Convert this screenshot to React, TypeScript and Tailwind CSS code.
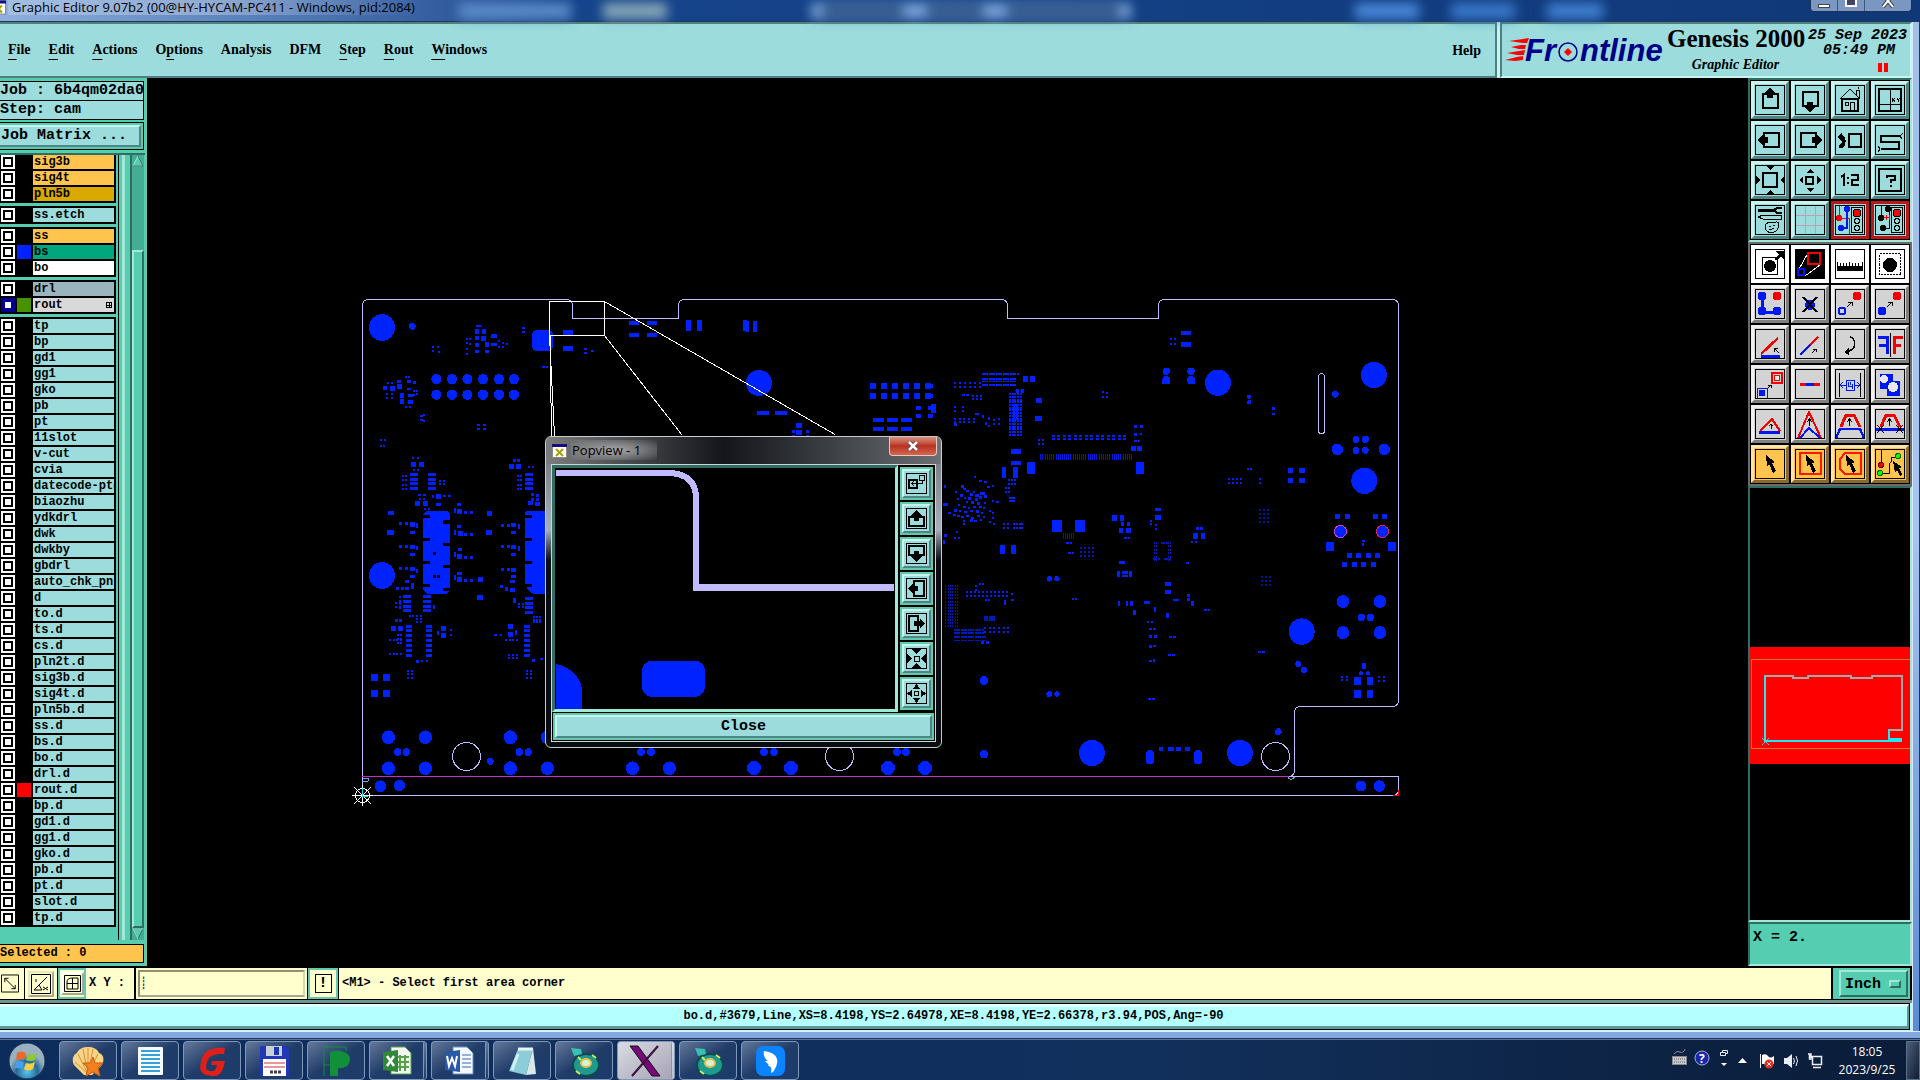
import React from "react";

const MONO = "font-['Liberation_Mono',monospace]";
const SERIF = "font-['Liberation_Serif',serif]";
const UI = "font-['Open_Sans',sans-serif]";

/* ---------- layer list ---------- */

type Layer = { name: string; bg?: string; swatch?: string; active?: boolean };

const GOLD = "bg-[#ffc44d]";
const layerGroups: Layer[][] = [
  [
    { name: "sig3b", bg: GOLD },
    { name: "sig4t", bg: GOLD },
    { name: "pln5b", bg: "bg-[#d9a900]" },
  ],
  [{ name: "ss.etch" }],
  [
    { name: "ss", bg: GOLD },
    { name: "bs", bg: "bg-[#00a67c]", swatch: "bg-[#0022ff]" },
    { name: "bo", bg: "bg-white" },
  ],
  [
    { name: "drl", bg: "bg-[#9bb5bf]" },
    { name: "rout", bg: "bg-[#d9d9d9]", swatch: "bg-[#479200]", active: true },
  ],
  [
    "tp", "bp", "gd1", "gg1", "gko", "pb", "pt", "11slot", "v-cut", "cvia", "datecode-ptd", "biaozhu",
    "ydkdrl", "dwk", "dwkby", "gbdrl", "auto_chk_pnl", "d", "to.d", "ts.d", "cs.d", "pln2t.d", "sig3b.d",
    "sig4t.d", "pln5b.d", "ss.d", "bs.d", "bo.d", "drl.d", "rout.d", "bp.d", "gd1.d", "gg1.d", "gko.d",
    "pb.d", "pt.d", "slot.d", "tp.d",
  ].map((name) => (name === "rout.d" ? { name, swatch: "bg-[#ff0000]" } : { name })),
];

function LayerRow({ layer }: { layer: Layer }) {
  const id = "layer-" + layer.name;
  return (
    <div className="flex h-[14px] gap-[2px] pl-px">
      <span className={"flex w-[14px] shrink-0 items-center justify-center " + (layer.active ? "bg-[#000090]" : "bg-white")}>
        <input
          id={id}
          type="checkbox"
          className={"m-0 h-[10px] w-[10px] appearance-none border-2 bg-white " + (layer.active ? "border-[#000090]" : "border-black")}
        />
      </span>
      <span className={"w-[14px] shrink-0 " + (layer.swatch ?? "bg-black")} />
      <label
        htmlFor={id}
        className={"flex min-w-0 flex-1 items-center justify-between overflow-hidden whitespace-nowrap pl-px text-[12px] leading-[14px] font-bold text-black " + (layer.bg ?? "bg-[#9cdcdc]")}
      >
        {layer.name}
        {layer.active && (
          <svg className="mr-[2px] h-[6px] w-[6px]" viewBox="0 0 6 6" shapeRendering="crispEdges">
            <path d="M0.5 0.5h5v5h-5zM3 0v6M0 3h6" fill="none" stroke="#000" />
          </svg>
        )}
      </label>
    </div>
  );
}

function LayerPanel() {
  return (
    <aside className={"flex w-[147px] shrink-0 flex-col border-r-2 border-[#6fc4ae] bg-[#55cdb0] pt-[3px] " + MONO}>
      <div className="mr-px border border-l-0 border-black bg-[#9cdcdc] text-[15px] leading-[18px] font-bold whitespace-pre">Job : 6b4qm02da0</div>
      <div className="mr-px border border-t-0 border-l-0 border-black bg-[#9cdcdc] text-[15px] leading-[18px] font-bold">Step: cam</div>
      <div className="mt-[2px] mr-px border border-l-0 border-black bg-[#55cdb0] py-[2px] pr-[2px]">
        <button className="block w-full border-y-2 border-r-2 border-t-[#c8f4f0] border-r-[#4f8585] border-b-[#4f8585] bg-[#9cdcdc] pl-px text-left text-[15px] leading-[18px] font-bold">
          Job Matrix ...
        </button>
      </div>
      <div className="mt-[3px] flex min-h-0 flex-1 border-t-2 border-[#2f6e60]">
        <div className="flex w-[116px] flex-col gap-[3px] overflow-hidden">
          {layerGroups.map((group, i) => (
            <div key={i} className={"flex flex-col gap-[2px] bg-black pr-[2px] pb-[2px] " + (i ? "pt-[2px]" : "")}>
              {group.map((l) => (
                <LayerRow key={l.name} layer={l} />
              ))}
            </div>
          ))}
        </div>
        <div className="ml-[2px] w-[2px] border-l border-black" />
        <div className="ml-[2px] w-[3px] bg-[#a3e8d6]" />
        <div className="ml-[5px] flex w-[14px] flex-col border-l-2 border-[#2f6e60] bg-[#45ad94]">
          <svg viewBox="0 0 12 12" className="h-3 w-3"><path d="M6 1L1 11H11Z" fill="#55cdb0" stroke="#a3e8d6" /><path d="M6 1L11 11H1" fill="none" stroke="#2f6e60" /></svg>
          <div className="h-[83px]" />
          <div className="flex-1 border-2 border-t-[#a3e8d6] border-r-[#2f6e60] border-b-[#2f6e60] border-l-[#a3e8d6] bg-[#55cdb0]" />
          <svg viewBox="0 0 12 12" className="h-3 w-3"><path d="M6 11L1 1H11Z" fill="#55cdb0" stroke="#2f6e60" /><path d="M6 11L1 1H11" fill="none" stroke="#a3e8d6" /></svg>
        </div>
      </div>
      <div className="mt-[4px] mr-px mb-[3px] border border-l-0 border-black bg-[#ffc44d] text-[12px] leading-[17px] font-bold">Selected : 0</div>
    </aside>
  );
}

/* ---------- header ---------- */

const menus: [string, number][] = [
  ["File", 0], ["Edit", 0], ["Actions", 0], ["Options", 1], ["Analysis", -1], ["DFM", -1], ["Step", 0], ["Rout", 0], ["Windows", 0],
];

function FrontlineLogo() {
  return (
    <svg viewBox="0 -8 162 46" className="h-[46px] w-[162px] shrink-0 overflow-visible">
      <g fill="#f00">
        <path d="M4 4L18 2L24 1L22 6L18 6Z" /><path d="M6 10L16 8L21 8L20 12L14 12Z" />
        <path d="M2 16L14 14L20 13L19 18L12 18Z" /><path d="M0 23L12 20L18 19L18 23L10 24Z" />
      </g>
      <text x="20" y="24" fontFamily="Liberation Sans" fontSize="31" fontWeight="bold" fontStyle="italic" fill="#000088">Fr</text>
      <circle cx="63" cy="15" r="9" fill="none" stroke="#000088" strokeWidth="1.5" />
      <path d="M63 11l4 4l-4 4l-4-4z" fill="#f00" />
      <text x="75" y="24" fontFamily="Liberation Sans" fontSize="31" fontWeight="bold" fontStyle="italic" fill="#000088">ntline</text>
    </svg>
  );
}

function Header() {
  return (
    <header className={"flex h-14 shrink-0 bg-[#c8f4f0] " + SERIF}>
      <nav className="flex flex-1 items-center border-t-2 border-r-2 border-b-2 border-[#4f7f7f] bg-[#9cdcdc] pr-[14px] pl-2 text-[14px] font-bold">
        <div className="flex gap-[18px]">
          {menus.map(([m, u]) => (
            <button key={m} className="leading-4">
              {u < 0 ? m : (<>{m.slice(0, u)}<span className="underline underline-offset-[5px]">{m[u]}</span>{m.slice(u + 1)}</>)}
            </button>
          ))}
        </div>
        <button className="ml-auto">Help</button>
      </nav>
      <div className="ml-[3px] flex w-[412px] items-start border-[2px] border-t-[#4f7f7f] border-r-[#c8f4f0] border-b-[#c8f4f0] border-l-[#4f7f7f] bg-[#9cdcdc] pl-[3px]">
        <div className="pt-[5px]"><FrontlineLogo /></div>
        <div className="w-[137px] shrink-0 text-center whitespace-nowrap">
          <div className="text-[25px] leading-[29px] font-bold">Genesis 2000</div>
          <div className="pt-[4px] text-[14px] leading-4 font-bold italic">Graphic Editor</div>
        </div>
        <div className={"ml-[4px] shrink-0 pt-[4px] text-right text-[15px] leading-[15px] font-bold italic " + MONO}>
          <div>25 Sep 2023</div>
          <div className="pr-3 whitespace-pre">05:49 PM</div>
          <div className="mt-[5px] mr-[19px] flex justify-end gap-[2px]">
            <span className="h-[9px] w-1 bg-[#f00]" /><span className="h-[9px] w-1 bg-[#f00]" />
          </div>
        </div>
      </div>
    </header>
  );
}

/* ---------- toolbar icons, drawn on a 30px grid ---------- */

const UP = "M15 2L20 8H18V13H12V8H10Z";
const DOWN = "M15 28L10 22H12V17H18V22H20Z";
const LEFT = "M2 15L8 10V12H13V18H8V20Z";
const RIGHT = "M28 15L22 10V12H17V18H22V20Z";
const CURSOR = "M11 6L12 17L14 15L18 24L21 22L17 14L20 13Z";

const S = ({ d, c = "#000", w = 1, f = "none" }: { d: string; c?: string; w?: number; f?: string }) => (
  <path d={d} stroke={c} strokeWidth={w} fill={f} />
);
const F = ({ d, c = "#000" }: { d: string; c?: string }) => <path d={d} fill={c} />;
const RED = "#f00000";
const BLU = "#0018f0";

const lights = (
  <>
    <rect x="16.500" y="2.500" width="11" height="25" fill="#9cdcdc" stroke="#000" />
    <circle cx="22" cy="8" r="4" fill="#f00" stroke="#000" />
    <circle cx="22" cy="16" r="2.500" fill="none" stroke="#000" strokeWidth="1.500" />
    <circle cx="22" cy="23" r="2.500" fill="none" stroke="#000" strokeWidth="1.500" />
  </>
);

type Tool = { label: string; tone: "aqua" | "alert" | "white" | "gray" | "gold"; icon: React.ReactNode };

const viewTools: Tool[] = [
  { label: "Pan up", tone: "aqua", icon: <><S d="M8 9H23V23H8Z" w={2} /><F d={UP} /></> },
  { label: "Pan down", tone: "aqua", icon: <><S d="M8 7H23V21H8Z" w={2} /><F d={DOWN} /></> },
  { label: "Home", tone: "aqua", icon: <><S d="M5 14L15 4L25 14M10 17h3v3h-3zM15 26V17h4V26M21 10V5h3V13M24 2l-1 2" w={1} /><S d="M7 14V26H23V14Z" w={1.5} /></> },
  { label: "Coordinates", tone: "aqua", icon: <><S d="M4 4H26V26H4Z" w={2} /><S d="M15 4V26M4 19H26" /><S d="M17 13l3 4M20 13l-3 4M22 13l1 2l2-2M23 15v2" /></> },
  { label: "Pan left", tone: "aqua", icon: <><S d="M9 8H24V22H9Z" w={2} /><F d={LEFT} /></> },
  { label: "Pan right", tone: "aqua", icon: <><S d="M6 8H21V22H6Z" w={2} /><F d={RIGHT} /></> },
  { label: "Previous view", tone: "aqua", icon: <><S d="M14 9H26V22H14Z" w={2} /><F d="M2 12L7 7V10C12 11 12 21 7 23H4V20C8 19 8 15 7 14V17Z" /></> },
  { label: "Snake", tone: "aqua", icon: <><S d="M25 11H6V17H24V24H6" w={2} /><S d="M25 11l3-3M25 11l2 3M5 24l-2-3M5 24l-2 3" /></> },
  { label: "Zoom in", tone: "aqua", icon: <><S d="M8 8H22V22H8Z" w={2} /><F d="M11 1H19L15 5ZM11 29H19L15 25ZM1 11V19L5 15ZM29 11V19L25 15Z" /></> },
  { label: "Zoom out", tone: "aqua", icon: <><S d="M11 12H18V19H11Z" w={2} /><F d="M11 8H19L15 4ZM11 23H19L15 27ZM8 11V19L4 15ZM22 11V19L26 15Z" /></> },
  { label: "Scale one to two", tone: "aqua", icon: <S d="M6 12L9 10V21M13 12v2M13 17v2M16 10H23V15H17V20H24" w={2} /> },
  { label: "Query", tone: "aqua", icon: <><S d="M4 4H26V26H4Z" w={2} /><S d="M12 13V11H20V15H16V18M16 20v2" w={2} /></> },
  { label: "Setup", tone: "aqua", icon: <><S d="M3 5H19" w={3} /><S d="M27 3h-5l-3 2l3 3h5" w={2} /><S d="M3 12L8 10H26V14H8Z" /><S d="M11 22C9 17 16 17 21 17C26 16 24 25 19 27C14 28 10 27 11 22ZM14 21h2M18 20h2M14 24c2 2 3-1 5 0" /></> },
  { label: "Grid", tone: "aqua", icon: <S d="M10 0V30M20 0V30M0 10H30M0 20H30" c="#c0a0b4" /> },
  { label: "Online check", tone: "alert", icon: <><S d="M4 0V13H14V30" c={RED} /><S d="M12 4V23H6" c={BLU} w={2} /><circle cx="4" cy="13" r="3" fill={RED} /><circle cx="12" cy="4" r="3" fill={BLU} /><circle cx="6" cy="23" r="3" fill={BLU} />{lights}</> },
  { label: "Online rules", tone: "alert", icon: <><S d="M6 0V13M14 4V23H8" /><S d="M8 10v5M11 10v5M14 10v5M8 12h7" c={RED} /><circle cx="6" cy="13" r="3" /><circle cx="13" cy="4" r="3" /><circle cx="8" cy="23" r="3" />{lights}</> },
];

const editTools: Tool[] = [
  { label: "Select feature", tone: "white", icon: <><S d="M7.5 8.500H22.500V25.500H7.500Z" /><circle cx="15" cy="17" r="6" /><S d="M21 11L27 4" w={3} /><F d="M20 2H29V11Z" /></> },
  { label: "Popview", tone: "white", icon: <><rect width="30" height="30" /><S d="M4 20L13 4M10 27L25 16" c="#fff" /><S d="M13 4H25V15H13Z" c={RED} w={2} /><S d="M3 20H9V26H3Z" c={BLU} w={2} /></> },
  { label: "Ruler", tone: "white", icon: <><F d="M2 17H28V22H2Z" /><S d="M2.500 13V17M5.500 14V17M8.500 14V17M11.500 14V17M14.500 13V17M17.500 14V17M20.500 14V17M23.500 14V17M27.500 13V17" /></> },
  { label: "Area select", tone: "white", icon: <><rect x="4.500" y="4.500" width="21" height="21" fill="none" stroke="#000" strokeDasharray="2 1" /><circle cx="15" cy="16" r="7" /></> },
  { label: "Connect", tone: "gray", icon: <><S d="M7 8V23H22" c={BLU} w={3} /><circle cx="7" cy="7" r="4.500" fill={BLU} /><circle cx="7" cy="22" r="4.500" fill={BLU} /><circle cx="22" cy="22" r="4.500" fill={BLU} /><circle cx="22" cy="7" r="4.500" fill={RED} /></> },
  { label: "Delete", tone: "gray", icon: <><circle cx="15" cy="16" r="5" fill={BLU} /><S d="M8 8L22 23M22 8L8 23" w={2} /></> },
  { label: "Copy", tone: "gray", icon: <><circle cx="7" cy="22" r="3.500" fill="none" stroke={BLU} strokeWidth="2" /><circle cx="22" cy="7" r="4.500" fill={RED} /><S d="M12 18L17 13M13 13H17V17" /></> },
  { label: "Move", tone: "gray", icon: <><circle cx="7" cy="22" r="4.500" fill={BLU} /><circle cx="22" cy="7" r="4.500" fill={RED} /><S d="M12 18L17 13M13 13H17V17" /></> },
  { label: "Rotate", tone: "gray", icon: <><S d="M6 25L23 9" c={RED} w={2.5} /><S d="M6 27H25" c={BLU} w={3} /><S d="M24 24L19 19M19 23V19H23" /></> },
  { label: "Stretch", tone: "gray", icon: <><S d="M15 16L23 8" c={RED} w={2.5} /><S d="M5 26L15 16" c={BLU} w={2.5} /><S d="M17 24L21 20M18 20H21V23" /></> },
  { label: "Undo", tone: "gray", icon: <><S d="M15 8C22 10 22 21 11 23" w={1.5} /><F d="M9 23L14 19V26Z" /></> },
  { label: "Mirror", tone: "gray", icon: <><S d="M15.500 4V28" /><S d="M3 8H12V25M4 16H12" c={BLU} w={3} /><S d="M28 8H19V25M26 16H19" c={RED} w={3} /></> },
  { label: "Substitute", tone: "gray", icon: <><S d="M2 19H12V29H2Z" c={BLU} w={1} /><circle cx="7" cy="24" r="3.500" fill={BLU} /><S d="M17 4H27V14H17Z" c={RED} w={2} /><circle cx="22" cy="9" r="3" fill="#eee" stroke={RED} /><S d="M13 19L16 16M13 16H16V19" /></> },
  { label: "Break line", tone: "gray", icon: <><S d="M5 15.500H25" c={RED} w={3} /><S d="M11 15.500H19" c={BLU} w={3} /></> },
  { label: "Spacing", tone: "gray", icon: <><S d="M4.500 4V28M25.500 4V28" /><S d="M5 16H25M8 13L5 16L8 19M22 13L25 16L22 19" c={BLU} /><rect x="11" y="11" width="8" height="10" fill="#d3d3d3" stroke={BLU} /><S d="M13 13V17H17M17 15V20M15 13v3" c={BLU} /></> },
  { label: "Merge shapes", tone: "gray", icon: <><F d="M5 5H18V12H25V27H12V20H5Z" c={BLU} /><circle cx="9" cy="10" r="4" fill="#e8e8f0" /><circle cx="18" cy="18" r="5" fill="#e8e8f0" /></> },
  { label: "Triangle", tone: "gray", icon: <><S d="M5 22L17 10L25 22" c={RED} w={2} /><S d="M4 23H25" c={BLU} w={3} /><S d="M16 20V15M14 17L16 15L18 17" /></> },
  { label: "Peak", tone: "gray", icon: <><S d="M3 29L14 3L26 29" c={RED} w={2} /><S d="M5 29L14 19L25 29" c={BLU} w={2} /><S d="M14.500 17V10M12 13L14.500 10L17 13" /></> },
  { label: "Trapezoid", tone: "gray", icon: <><S d="M6 18L11 6H19L25 18" c={RED} w={3} /><S d="M1 29L5 20H25L29 29" c={BLU} w={2.5} /><S d="M14.500 17V10M12 13L14.500 10L17 13" /></> },
  { label: "Trapezoid cut", tone: "gray", icon: <><S d="M6 18L11 6H19L25 18" c={RED} w={3} /><S d="M1 20H29" c={BLU} w={3} /><S d="M14.500 17V10M12 13L14.500 10L17 13M2 16l7 8M9 16l-7 8M21 16l7 8M28 16l-7 8" /></> },
  { label: "Single select", tone: "gold", icon: <F d={CURSOR} /> },
  { label: "Frame select", tone: "gold", icon: <><S d="M5 4H26V25H5Z" c="#ff1800" w={2} /><F d={CURSOR} /></> },
  { label: "Polygon select", tone: "gold", icon: <><S d="M10 4H26V25H10L5 20V10Z" c="#ff1800" w={2} /><F d={CURSOR} /></> },
  { label: "Net select", tone: "gold", icon: <><S d="M6.500 0V16M5 24H14V15L16 13V8H23" w={1} /><circle cx="6" cy="16" r="2.500" fill="#f00" stroke="#600" /><circle cx="5" cy="24" r="2.500" fill="#0f0" stroke="#060" /><circle cx="23" cy="7" r="2.500" fill="#0f0" stroke="#060" /><F d="M18 12L20 24L22 21L25 27L27 25L24 19L27 18Z" /></> },
];

const tones = {
  aqua: "bg-[#9cdcdc] border-t-[#c8f4f0] border-l-[#c8f4f0] border-r-[#4f8585] border-b-[#4f8585]",
  alert: "bg-[#9cdcdc] border-[#b81818]",
  white: "bg-white border-white",
  gray: "bg-[#d3d3d3] border-t-[#f0f0f0] border-l-[#f0f0f0] border-r-[#808080] border-b-[#808080]",
  gold: "bg-[#ffc44d] border-t-[#ffe4a8] border-l-[#ffe4a8] border-r-[#8a6a28] border-b-[#8a6a28]",
};

function ToolGrid({ tools }: { tools: Tool[] }) {
  return (
    <div className="grid grid-cols-4 gap-[2px] bg-black p-px">
      {tools.map((t) => (
        <button key={t.label} aria-label={t.label} className={"flex h-[38px] items-center justify-center border-3 " + tones[t.tone]}>
          <svg viewBox="0 0 30 30" className="h-[30px] w-[30px] shrink-0" shapeRendering="crispEdges">
            {t.icon}
            <rect x="0.500" y="0.500" width="29" height="29" fill="none" stroke="#000" />
          </svg>
        </button>
      ))}
    </div>
  );
}

function RightColumn() {
  return (
    <aside className="flex w-[164px] shrink-0 flex-col">
      <div className="border-2 border-t-[#2f6e60] border-r-[#a3e8d6] border-b-[#a3e8d6] border-l-[#2f6e60]"><ToolGrid tools={viewTools} /></div>
      <div className="border-2 border-[#6b6b6b]"><ToolGrid tools={editTools} /></div>
      <div className="min-h-0 flex-1 border-2 border-t-[#2f6e60] border-r-[#a3e8d6] border-b-[#a3e8d6] border-l-[#2f6e60] bg-black">
        <svg viewBox="0 0 160 432" className="h-full w-full" preserveAspectRatio="none" shapeRendering="crispEdges">
          <rect y="159" width="160" height="117" fill="#f00" />
          <rect x="1.500" y="171.500" width="160" height="89" fill="none" stroke="#d87820" />
          <path d="M15 253V188H43V190H58V188H101V190H122V188H152V242H139V253" fill="none" stroke="#a8a8a8" strokeWidth="2" />
          <path d="M15 188V253H152M139 242V251H152" fill="none" stroke="#20e8f0" strokeWidth="2" />
          <path d="M12 250l7 7M19 250l-7 7" stroke="#60d0d8" fill="none" />
        </svg>
      </div>
      <div className={"h-[44px] shrink-0 border-2 border-t-[#2f6e60] border-r-[#a3e8d6] border-b-[#a3e8d6] border-l-[#2f6e60] bg-[#55cdb0] pt-[5px] pl-[3px] text-[15px] leading-[18px] font-bold " + MONO}>
        X = 2.
      </div>
    </aside>
  );
}

/* ---------- board drawing ---------- */

type Area = { ox: number; oy: number; sx: number; sy: number };
const west: Area = { ox: 350, oy: 280, sx: 3, sy: 2.904 };
const mid: Area = { ox: 930, oy: 280, sx: 3, sy: 2.958 };
const east: Area = { ox: 1240, oy: 280, sx: 3, sy: 2.958 };
const page: Area = { ox: 0, oy: 0, sx: 1, sy: 1 };

const parse = (s: string) => s.trim().split(/\s+/).map((p) => p.split(",").map(Number));

/* Pads given by centre and size: "cx,cy,w,h" */
function Pads({ a, d }: { a: Area; d: string }) {
  return (
    <>
      {parse(d).map(([x, y, w, h], i) => {
        const pw = Math.max(1, Math.round(w / a.sx));
        const ph = Math.max(1, Math.round(h / a.sy));
        return <rect key={i} x={Math.round(a.ox + x / a.sx - pw / 2)} y={Math.round(a.oy + y / a.sy - ph / 2)} width={pw} height={ph} />;
      })}
    </>
  );
}

/* Round pads: "cx,cy,r" */
function Dots({ a, d }: { a: Area; d: string }) {
  return (
    <>
      {parse(d).map(([x, y, r], i) => (
        <ellipse key={i} cx={a.ox + x / a.sx} cy={a.oy + y / a.sy} rx={r / a.sx} ry={r / a.sy} />
      ))}
    </>
  );
}

/* Arrays of pads: "x,y,cols,rows,dx,dy,w,h", x and y being the first centre */
function Arrays({ a, d }: { a: Area; d: string }) {
  const out: string[] = [];
  parse(d).forEach(([x, y, c, r, dx, dy, w, h]) => {
    for (let i = 0; i < c; i++) for (let j = 0; j < r; j++) out.push([x + i * dx, y + j * dy, w, h].join(","));
  });
  return <Pads a={a} d={out.join(" ")} />;
}

function Board() {
  return (
    <svg viewBox="147 78 1601 888" className="block h-full w-full" shapeRendering="crispEdges">
      <g fill="#0022ff">
        <Dots a={west} d="96,138,39 187,135,10 96,858,39 115,1328,20 226,1328,20 481,1328,20 592,1328,20 115,1418,20 226,1418,20 481,1418,20 592,1418,20 847,1418,20 958,1418,20 143,1371,11 169,1371,11 508,1371,11 535,1371,11 421,1398,10 91,1470,17 148,1468,17" />
        <Dots a={west} d="259,288,15 306,288,15 352,288,15 399,288,15 447,288,15 492,288,15 259,333,15 306,333,15 352,333,15 399,333,15 447,333,15 492,333,15" />
        <rect x="532" y="330" width="21" height="21" rx="5" />
        <Pads a={west} d="852,126,30,12 906,126,30,12 852,160,30,12 906,160,30,12 1015,132,15,32 1048,132,15,32 1184,132,12,32 654,153,30,14 654,198,30,14 520,140,8,6 520,152,8,6 248,195,6,6 265,195,6,6 248,207,6,6 268,208,7,7" />
        <Pads a={west} d="386,134,14,5 380,150,12,14 402,150,12,14 380,168,12,12 400,170,14,14 381,188,12,12 411,188,12,15 432,162,18,12 432,187,18,10 381,207,12,8 411,207,12,8 350,170,5,5 360,172,5,5 350,184,5,5 360,186,5,5 350,200,5,5 350,215,5,5 447,178,5,5 460,184,5,5 470,187,5,5 448,196,5,5 460,196,5,5 707,200,8,6 707,212,8,6 728,206,8,6 580,254,8,6 590,254,6,6" />
        <Pads a={west} d="105,315,12,12 127,315,15,14 115,300,6,6 127,300,6,6 146,295,12,8 148,310,14,14 178,295,12,8 178,316,12,6 168,282,6,6 178,282,6,6 192,297,8,8 112,330,6,5 125,330,6,5 112,342,6,5 125,342,6,5 156,336,12,14 180,336,14,10 156,353,12,14 180,353,14,12 192,323,5,5 202,323,5,5 192,334,5,5 202,330,5,5 168,370,5,6 180,370,5,6 213,394,8,6 223,392,5,5 213,408,8,6 223,409,5,5 386,422,8,6 403,421,8,5 386,434,8,6 403,433,8,5 92,466,7,6 104,465,7,6 92,482,7,6 102,482,7,6" />
        <Pads a={west} d="190,517,7,7 205,517,7,7 190,536,14,14 213,536,16,14 192,553,7,7 203,553,7,7 492,523,8,8 506,523,8,8 483,541,16,14 506,541,16,14 537,544,7,7 548,544,7,7 209,624,8,7 223,624,8,7 209,636,7,7 223,636,7,7 202,649,14,14 225,649,14,14 265,629,16,14 265,652,14,10 284,627,8,6 298,627,8,6 250,629,6,8 226,664,6,6 236,664,6,6 548,624,8,8 563,626,8,8 548,638,8,8 563,638,8,8 541,649,14,12 563,650,14,12" />
        <Arrays a={west} d="191,564,1,4,0,14,24,9 247,564,1,4,0,14,24,9 536,564,1,4,0,14,24,9 158,570,2,4,9,12,5,5 504,570,2,4,9,12,5,5 270,583,2,2,11,9,5,6 172,919,1,4,0,14,24,9 231,919,1,4,0,14,24,9 538,924,1,4,0,14,24,9 139,938,2,2,10,12,5,5 151,920,1,4,0,11,6,6 178,1005,1,7,0,14,17,8 237,1005,1,7,0,14,17,8 530,1005,1,7,0,14,17,8 202,975,2,3,10,9,6,6 552,979,3,3,9,7,6,6 120,1046,4,1,11,0,6,5 120,1086,4,1,11,0,6,5 143,1030,2,3,11,12,6,5 174,1135,2,3,11,10,6,6 531,1135,2,3,11,10,6,6 478,1088,3,2,11,10,6,5 468,1046,4,1,11,0,6,5 508,940,2,2,10,9,6,6" />
        <Pads a={west} d="122,678,18,12 121,732,20,15 418,678,16,14 417,732,18,15 390,869,16,14 390,923,18,15 152,708,9,9 169,708,9,9 187,710,14,14 187,732,14,10 202,713,7,14 152,773,9,9 169,773,9,9 187,775,14,12 187,796,14,10 202,777,7,12 152,839,9,9 169,839,9,9 187,839,14,12 187,860,14,8 200,845,7,12 172,877,12,10 141,897,9,9 156,897,9,9 172,897,12,9 187,890,9,16" />
        <Pads a={west} d="458,712,9,9 474,712,9,9 490,712,14,12 490,732,14,9 508,717,7,14 458,775,9,9 474,775,9,9 490,775,14,12 490,798,14,9 508,780,7,14 458,841,9,9 474,841,9,9 490,841,14,12 490,862,14,8 487,877,14,8 455,890,9,9 470,897,9,12 487,899,14,12 492,932,9,14" />
        <Pads a={west} d="328,653,12,8 328,672,16,14 347,674,9,9 364,675,9,9 316,668,6,14 328,717,12,8 330,737,14,14 347,740,9,9 364,740,9,9 316,733,6,14 330,784,12,10 328,802,14,14 347,806,9,9 364,806,9,9 316,798,6,14 328,851,14,9 328,870,14,14 347,873,9,9 364,873,9,9 316,865,6,14 253,951,7,12 138,990,10,8 152,990,10,8 129,1011,15,14 152,1011,15,14 281,1011,14,14 281,1032,14,14 263,1025,7,12 304,1017,6,6 304,1030,6,6 481,1007,14,14 481,1029,14,14 437,1032,9,6 454,1032,6,6 497,1025,6,14 203,1109,9,9 217,1105,6,6 230,1105,6,6 550,1105,9,9 575,1100,8,5 73,1154,21,20 109,1154,21,20 73,1201,21,20 109,1201,21,20 180,975,6,6 190,975,6,6" />
        <path d="M426 511h21l3 3v76l-3 4h-19l-5-4v-76z" />
        <path d="M526 511h20v83h-12l-5-3l-4-6v-71z" />
        <g fill="#000">
          <Pads a={west} d="229,688,21,9 290,703,20,12 229,754,21,9 289,768,20,8 229,820,21,9 289,833,20,8 229,887,21,9 290,899,20,9 253,794,9,8 253,861,9,8 265,861,9,8 536,688,22,9 536,754,22,9 536,820,22,9 536,887,22,9" />
        </g>

        <Dots a={page} d="759,383,13 641,752,4 651,752,4 764,752,4 774,752,4 897,752,4 906,752,4 754,768,7 791,768,7 888,768,7 925,768,7" />
        <Arrays a={page} d="747,326,1,1,0,0,4,11 755,326,1,1,0,0,4,11 763,413,2,1,18,0,12,4 873,386,6,1,11,0,6,6 873,396,6,1,11,0,6,6 793,431,2,2,14,5,3,3 799,425,1,1,0,0,6,5 799,432,1,1,0,0,6,5 878,420,3,2,14,9,11,4 918,408,2,2,12,8,5,4" />

        <Dots a={mid} d="864,304,39 709,270,11 783,270,11 709,296,12 783,296,12 1115,1040,39 486,1399,39 930,1399,39 162,1185,13 162,1403,12 1045,1336,10 1105,1136,9 1122,1153,9 957,346,6 957,361,6 358,884,8 381,884,8 358,1225,9 381,1225,8 262,328,6 277,328,6" />
        <Pads a={mid} d="768,156,30,11 768,190,30,14 709,300,24,14 783,300,20,14 286,293,14,18 308,293,14,18 326,356,18,14 325,411,20,15 10,381,14,28 3,314,10,12 3,344,10,12 258,508,30,14 258,540,30,12 222,569,12,32 257,569,14,32 303,555,24,36 629,555,24,36 610,497,14,16 628,497,14,16 616,434,9,9 634,434,9,9 617,456,8,8 632,456,6,6 617,476,9,5 628,476,5,5 518,331,5,5 531,334,5,5 518,346,5,5 531,346,5,5 381,727,30,36 450,727,30,36 217,796,15,28 250,796,15,28" />
        <Pads a={mid} d="553,703,15,18 576,703,12,18 577,721,9,11 595,721,10,11 573,742,12,16 595,742,14,15 586,762,8,6 596,762,6,6 683,680,18,9 683,702,18,14 664,713,6,5 664,723,6,5 679,725,6,5 679,736,6,6 801,734,9,9 815,734,8,9 796,757,15,18 819,757,12,18 787,776,7,6 797,776,6,6 772,837,8,5 571,835,8,8 581,835,8,8 585,864,18,8 586,876,18,6 566,870,9,18 601,870,9,18 714,899,18,11 714,922,18,11 646,954,9,8 656,954,8,8 733,948,8,6 743,948,8,6 775,934,9,9 775,945,8,8 787,957,9,15 827,975,8,5 836,975,6,5 613,985,8,15 566,958,6,16 592,958,6,14 604,958,9,15 675,975,6,15 712,993,9,15 655,1012,6,5 665,1012,6,5 662,1031,8,5 673,1031,8,5 660,1054,9,8 675,1054,8,8 660,1083,8,8 673,1083,8,6 721,1056,8,5 732,1056,8,5 719,1108,8,5 731,1108,8,5 660,1126,8,6 672,1126,6,8 658,1240,8,6 671,1240,8,6 428,945,7,6 439,945,7,6 413,779,8,6 423,779,6,6 418,807,8,5 429,807,6,5" />
        <Arrays a={mid} d="370,460,14,1,16.500,0,9,6 370,470,14,1,16.500,0,9,6 158,278,16,1,7,0,5,5 158,292,15,1,7,0,6,6 158,301,15,1,7,0,6,4 158,311,15,1,7,0,5,5 240,338,5,16,8,8,5,5 252,370,2,6,8,8,5,9 75,306,6,2,15,10,5,7 75,410,5,2,14,11,6,7 222,723,2,2,12,10,5,6 253,723,4,2,8,10,6,7 111,924,11,2,12,10,6,6 165,1030,6,2,14,10,6,6 75,376,2,2,24,12,5,6 130,342,3,2,12,10,6,7 896,589,4,2,12,11,5,7 228,616,2,2,10,12,5,6 238,592,3,2,8,10,6,6 239,645,3,2,7,10,5,6" />
        <g opacity="0.750">
          <Arrays a={mid} d="401,757,6,1,6,0,3,18 452,792,4,3,12,12,5,5 47,906,6,14,7,9,4,5 74,1034,13,2,7,9,5,5 74,1055,14,1,7,0,6,5 74,1065,14,1,7,0,5,4 165,1000,5,1,7,0,5,14 674,778,2,6,6,10,4,5 715,778,2,6,7,10,4,5 672,824,3,1,7,0,5,5 705,824,3,1,7,0,5,5 695,778,3,1,8,0,5,6" />
        </g>
        <Pads a={mid} d="135,584,6,6 150,596,8,7 165,597,8,5 176,613,8,7 188,610,7,6 97,612,9,9 104,618,8,7 79,628,7,5 112,624,9,7 133,628,7,5 94,637,8,9 104,645,7,6 124,635,9,9 140,637,12,9 158,633,14,9 166,640,9,9 84,648,6,7 119,645,8,9 138,648,8,8 152,644,9,9 112,658,7,7 127,657,9,8 146,660,10,8 164,659,7,6 190,655,7,7 203,656,9,6 88,667,7,7 103,671,9,7 116,673,7,7 134,672,9,7 151,670,8,7 163,674,6,6 76,682,8,9 91,683,7,7 106,686,8,7 123,682,9,7 141,684,8,9 157,688,6,7 181,683,6,6 190,689,7,6 72,694,9,6 84,698,8,6 97,700,8,7 113,697,9,7 128,703,8,7 146,698,9,7 161,701,7,6 189,705,6,6 101,713,7,7 124,712,8,8 136,714,9,6 152,709,7,7 179,717,7,6 192,721,7,6 101,721,6,6 82,744,6,6 75,762,6,6 86,762,6,6 45,610,6,10 45,663,14,8 58,688,8,5 45,755,8,9 43,775,6,12 138,904,7,7 150,900,7,6 160,900,6,5 138,917,7,7 247,930,6,6 247,946,8,6 225,954,6,15 168,947,6,5 177,947,6,5 158,1071,8,8 172,1071,8,8 100,341,8,6 111,341,8,5 141,397,12,5 160,404,6,8 176,410,6,8 192,414,6,7 206,412,7,6 168,424,6,9 178,432,7,6 192,427,6,7 206,427,7,7 76,426,9,8 328,472,6,5 338,472,6,5 328,484,6,5 338,484,6,5 724,174,5,5 735,174,5,5 724,189,5,5 735,189,5,5" />
        <Pads a={mid} d="660,1412,24,24 804,1412,24,24 694,1386,12,12 719,1386,12,12 726,1386,12,12 745,1386,14,12 772,1386,15,12 987,1099,8,7 1001,1099,8,7" />
        <Dots a={mid} d="660,1403,12 660,1421,12 804,1403,12 804,1421,12" />
        <g opacity="0.850">
          <Arrays a={mid} d="332,524,10,1,6.600,0,3,17 398,524,12,1,6.200,0,3,17 476,524,11,1,6.200,0,3,17 548,524,10,1,6.200,0,3,17" />
        </g>

        <Dots a={east} d="402,281,39 286,338,10 292,501,17 433,501,17 348,472,10 376,471,11 348,504,10 376,504,10 373,594,39 301,744,17 428,744,17 309,951,19 420,951,19 309,1043,19 420,1043,19 364,998,11 391,998,11 363,1497,16 418,1497,17 363,1163,6 384,1163,6" />
        <Pads a={east} d="151,563,16,14 186,563,18,14 151,593,16,14 186,593,18,14 292,699,15,15 322,699,15,15 406,699,15,15 433,699,15,15 269,787,24,28 456,787,24,28 328,815,15,15 355,815,15,15 385,815,15,15 412,815,15,15 313,842,15,15 343,842,15,15 370,842,15,15 399,842,16,15 372,1142,12,18 352,1186,20,24 390,1186,18,24 352,1225,20,24 390,1225,18,24 370,772,9,6 370,782,5,8 101,380,8,8 100,395,9,7 23,560,7,6 34,560,6,6 61,589,7,6 61,599,6,6" />
        <Arrays a={east} d="307,1173,2,2,15,10,6,5 418,1175,2,2,15,10,7,5" />
        <g opacity="0.600">
          <Arrays a={east} d="60,680,3,4,12,12,6,6 66,879,3,3,12,12,6,6" />
        </g>
      </g>

      <g fill="none" stroke="#c0baff">
        <path d="M362.500 776V306Q362.500 299.500 369 299.500H566Q572.500 299.500 572.500 306V318.500H678.500V306Q678.500 299.500 685 299.500H1001Q1007.500 299.500 1007.500 306V318.500H1158.500V306Q1158.500 299.500 1165 299.500H1392Q1398.500 299.500 1398.500 306V700Q1398.500 706.500 1392 706.500H1301Q1294.500 706.500 1294.500 713V770Q1294.500 776.500 1288 776.500H1398.500V789Q1398.500 795.500 1392 795.500H362.500V776" />
        <circle cx="466.500" cy="756.500" r="14" />
        <circle cx="839.500" cy="756.500" r="14" />
        <circle cx="1275.500" cy="756.500" r="14" />
        <rect x="1318.500" y="373.500" width="6" height="60" rx="3" />
      </g>
      <path d="M362 776.500H1289" stroke="#c030c8" />
      <path d="M1288 777q1 3 4 2l3-2" stroke="#60b0d0" fill="none" />
      <path d="M363 778h6l-1 3h-5" stroke="#60b0d0" fill="none" />
      <path d="M1398.500 790V795.500H1393" stroke="#f00" fill="none" />
      <circle cx="1340.500" cy="531.500" r="6" fill="none" stroke="#d040d0" />
      <circle cx="1382.500" cy="531.500" r="6" fill="none" stroke="#e02060" />
      <g fill="none" stroke="#fff">
        <rect x="549.500" y="301.500" width="55" height="34" />
        <path d="M604.500 301.500L835 434.500M604.500 335.500L682 435M549.500 301.500L551.500 436M549.500 335.500L554.500 436" />
        <circle cx="362.500" cy="795.500" r="7" />
        <path d="M352 795.500H373M362.500 785V806M354 787L371 804M371 787L354 804" />
      </g>
      <path d="M362.500 788v8h5" stroke="#20e0f0" fill="none" />
    </svg>
  );
}

/* ---------- popview window ---------- */

const popTools: [string, React.ReactNode][] = [
  ["Attach view", <><S d="M3 7H11V15H3Z" w={2} /><S d="M13.500 2.500H18.500V7.500H13.500ZM14 10.500H6M8 8L6 10.500L8 13M16.500 7V10.500H13" /></>],
  ["Up", <><S d="M3 9H18V18H3Z" w={2} /><F d="M10.500 2L16 8H13V13H8V8H5Z" /></>],
  ["Down", <><S d="M3 3H18V12H3Z" w={2} /><F d="M10.500 19L16 13H13V8H8V13H5Z" /></>],
  ["Left", <><S d="M8 3H18V18H8Z" w={2} /><F d="M2 10.500L7 5V8H12V13H7V16Z" /></>],
  ["Right", <><S d="M3 3H12V18H3Z" w={2} /><F d="M19 10.500L14 5V8H8V13H14V16Z" /></>],
  ["Zoom in", <><S d="M8 8H13V13H8Z" /><F d="M6 1H15L10.500 6ZM6 20H15L10.500 15ZM1 6V15L6 10.500ZM20 6V15L15 10.500Z" /></>],
  ["Zoom out", <><S d="M8.500 8.500H12.500V12.500H8.500Z" /><F d="M7 6H14L10.500 1ZM7 15H14L10.500 20ZM6 7V14L1 10.500ZM15 7V14L20 10.500Z" /></>],
];

function XIcon({ className }: { className: string }) {
  return (
    <svg viewBox="0 0 15 14" className={className}>
      <rect x="0.500" y="0.500" width="14" height="13" fill="#fff" stroke="#888" />
      <rect width="15" height="3" fill="#101078" />
      <path d="M4 5l7 7M11 5l-7 7" stroke="#a8a000" strokeWidth="2" />
    </svg>
  );
}

function Popview() {
  return (
    <section className="absolute top-[358px] left-[398px] flex h-[312px] w-[397px] flex-col rounded-md border border-[#c8ccd0] bg-linear-to-b from-[#6c7074] via-[#a8b0c0] via-30% to-[#0a0c14] to-40% px-[5px] pb-[5px]">
      <div className={"-mx-[4px] flex h-[27px] shrink-0 items-center rounded-t bg-linear-to-r from-[#7c7c7c] via-[#14161c] via-45% to-[#6c7074] pl-[5px] text-black " + UI}>
        <XIcon className="h-[14px] w-[15px]" />
        <span className="mb-[2px] ml-1 bg-radial from-[#a8a8a8] to-transparent pr-4 pl-px text-[13px] leading-5">Popview - 1</span>
        <button aria-label="Close window" className="mr-[3px] ml-auto flex h-[19px] w-[48px] items-center justify-center self-start rounded-b border border-t-0 border-[#e8c8c0] bg-linear-to-b from-[#d89080] via-[#b83020] to-[#d06850]">
          <svg viewBox="0 0 12 10" className="h-[10px] w-3"><path d="M2 1L10 9M10 1L2 9" stroke="#444" strokeWidth="4" /><path d="M2 1L10 9M10 1L2 9" stroke="#fff" strokeWidth="2.500" /></svg>
        </button>
      </div>
      <div className="flex min-h-0 flex-1 flex-col border border-[#d0d4d8] bg-black">
        <div className="flex min-h-0 flex-1">
          <div className="min-w-0 flex-1 border-3 border-t-[#2f6e60] border-r-[#a3e8d6] border-b-[#a3e8d6] border-l-[#2f6e60] bg-black">
            <svg viewBox="0 0 340 240" className="h-full w-full" preserveAspectRatio="none" shapeRendering="crispEdges">
              <path d="M1 5H113Q141 5 141 31V119H339" fill="none" stroke="#c0baff" strokeWidth="6" />
              <path d="M1 195C16 198 27 210 27 222V240H1Z" fill="#0022ff" />
              <rect x="87" y="192" width="63" height="36" rx="10" fill="#0022ff" />
            </svg>
          </div>
          <div className="flex shrink-0 flex-col gap-[2px] px-[2px] pt-[2px]">
            {popTools.map(([label, icon]) => (
              <button key={label} aria-label={label} className="flex h-[33px] w-[33px] items-center justify-center border-2 border-[#62c8ae] bg-[#9cdcdc]">
                <span className="flex h-[29px] w-[29px] items-center justify-center border-2 border-t-[#c8f4f0] border-r-[#4f8585] border-b-[#4f8585] border-l-[#c8f4f0]">
                  <svg viewBox="0 0 21 21" className="h-[21px] w-[21px]" shapeRendering="crispEdges">{icon}<rect x="0.500" y="0.500" width="20" height="20" fill="none" stroke="#000" /></svg>
                </span>
              </button>
            ))}
          </div>
        </div>
        <div className="mx-px my-px border-2 border-[#62c8ae]">
          <button className={"block h-[23px] w-full border-2 border-t-[#c8f4f0] border-r-[#4f8585] border-b-[#4f8585] border-l-[#c8f4f0] bg-[#9cdcdc] text-center text-[15px] leading-[18px] font-bold " + MONO}>Close</button>
        </div>
      </div>
    </section>
  );
}

/* ---------- status rows ---------- */

function StatusRows() {
  return (
    <footer className={"shrink-0 text-[12px] font-bold " + MONO}>
      <div className="flex h-[34px] border-t-2 border-black bg-black pb-px">
        <div className="flex gap-px">
          <button aria-label="Line mode" className="flex w-[24px] items-center justify-end border border-[#ffffce] bg-[#ffffce] pr-1">
            <svg viewBox="0 0 19 19" className="h-[19px] w-[19px]"><path d="M0.500 0.500H18.500V18.500H0.500ZM4 4L15 15M4 8V4H8M15 11V15H11" fill="none" stroke="#000" /></svg>
          </button>
          <button aria-label="Angle mode" className="flex w-[32px] items-center justify-center bg-[#ffffce]">
            <span className="border-2 border-t-[#e8e8c0] border-r-[#a8a890] border-b-[#a8a890] border-l-[#e8e8c0] p-px">
              <svg viewBox="0 0 20 20" className="h-5 w-5"><path d="M0.500 0.500H19.500V19.500H0.500ZM3 16L16 3M3 16H11L8 11M5 5v3M12 13l5 3M17 13l-5 3" fill="none" stroke="#000" /></svg>
            </span>
          </button>
          <button aria-label="Snap mode" className="flex w-[28px] items-center justify-center border-2 border-[#62c8ae] bg-[#ffffce]">
            <span className="border-2 border-t-[#fff] border-r-[#a8a890] border-b-[#a8a890] border-l-[#fff] p-px">
              <svg viewBox="0 0 17 17" className="h-[17px] w-[17px]"><path d="M0.500 0.500H16.500V16.500H0.500ZM3 7Q3 3 8.500 3H14V14H3ZM8.500 3V14M3 8.500H14" fill="none" stroke="#000" /></svg>
            </span>
          </button>
        </div>
        <label htmlFor="xy" className="w-[48px] bg-[#ffffce] pl-[3px] leading-[31px] whitespace-pre">X Y :</label>
        <div className="ml-[2px] w-[171px] bg-[#ffffce] p-[2px]">
          <input id="xy" className="h-full w-full border-2 border-t-[#909078] border-r-[#d8d8b0] border-b-[#a8a890] border-l-[#909078] bg-[#ffffce] px-0 outline-none" defaultValue="┊" />
        </div>
        <button aria-label="Alert" className="mx-px flex w-[30px] items-center justify-center border-2 border-[#62c8ae] bg-[#ffffce]">
          <span className="flex h-[19px] w-[17px] items-center justify-center border border-black text-[15px] leading-4">!</span>
        </button>
        <div className="flex-1 bg-[#ffffce] pl-[3px] leading-[31px]">&lt;M1&gt; - Select first area corner</div>
        <div className="ml-[2px] flex w-[77px] bg-[#55cdb0] py-[2px] pr-[2px] pl-[6px]">
          <div className="relative w-full border-2 border-t-[#a3e8d6] border-r-[#2f6e60] border-b-[#2f6e60] border-l-[#a3e8d6]">
            <select aria-label="Units" className="h-full w-full appearance-none bg-[#55cdb0] pt-[2px] pl-1 text-[15px] font-bold outline-none">
              <option>Inch</option>
              <option>MM</option>
            </select>
            <span className="pointer-events-none absolute top-2 right-[5px] h-2 w-3 border-2 border-t-[#a3e8d6] border-r-[#2f6e60] border-b-[#2f6e60] border-l-[#a3e8d6]" />
          </div>
        </div>
        <div className="w-[2px]" />
      </div>
      <div className="h-[31px] border-t-3 border-[#6f9490] bg-[#b4ffff] pr-[2px] pb-px">
        <div className="h-[27px] border-y border-r border-black">
          <div className="h-[25px] border-t-3 border-r-2 border-b-3 border-t-[#e0ffff] border-r-[#609898] border-b-[#609898] text-center leading-[19px]">
            bo.d,#3679,Line,XS=8.4198,YS=2.64978,XE=8.4198,YE=2.66378,r3.94,POS,Ang=-90
          </div>
        </div>
      </div>
    </footer>
  );
}

/* ---------- taskbar ---------- */

const donut = (
  <>
    <ellipse cx="18" cy="20" rx="13" ry="11" fill="#1e9a90" stroke="#0c4c50" strokeWidth="2" />
    <ellipse cx="18" cy="18" rx="5" ry="4" fill="#d8f0e0" stroke="#e8c040" strokeWidth="2" />
    <path d="M3 3l10 1l1 5l-8 2z" fill="#38c0b0" /><path d="M8 26l4 3M24 10l4 3M10 12l3 3" stroke="#c8f060" strokeWidth="2" />
  </>
);

const tasks: { label: string; icon: React.ReactNode; stacked?: boolean; lit?: boolean }[] = [
  { label: "Shell", icon: <><path d="M12 30L2 20C-1 14 2 9 5 8C7 3 12 2 16 2C20 2 25 3 27 8C31 9 33 14 30 20L20 30Z" fill="#f8d488" /><path d="M16 29L3 17M16 29L6 9M16 29L11 4M16 29V3M16 29L21 4M16 29L26 9M16 29L29 17" stroke="#d89030" /><path d="M21 12l2 6l8 0l-5 5l2 8l-7-4l-7 4l2-8l-5-5l7 0z" fill="#f08020" stroke="#c86010" /></> },
  { label: "Text file", icon: <><rect x="4" y="2" width="25" height="28" rx="1" fill="#f4faff" /><path d="M7 6H26M7 10H26M7 14H26M7 18H26M7 22H26M7 26H26" stroke="#38a0d8" strokeWidth="2" /></> },
  { label: "G tool", icon: <path d="M29 3C13 2 7 7 5 17C2 28 8 31 18 31C25 31 27 25 29 16H16L15 20H21C20 25 18 27 14 26C9 26 10 21 11 17C13 10 18 9 28 9Z" fill="#e02018" /> },
  { label: "Disk 64", icon: <><path d="M2 1H28L31 4V31H2Z" fill="#2038b8" /><rect x="8" y="1" width="16" height="10" fill="#c8d0d8" /><rect x="16" y="2" width="5" height="8" fill="#2038b8" /><rect x="5" y="14" width="23" height="17" fill="#fff" /><path d="M6 18H27M6 22H27" stroke="#d03030" /><path d="M12 27h12" stroke="#404040" strokeWidth="3" strokeDasharray="3 1" /></> },
  { label: "P tool", icon: <><path d="M10 31V8C12 4 30 5 30 14C30 22 22 24 18 23V31Z" fill="#109038" /><path d="M4 31V2H26V6M4 20H10" fill="none" stroke="#109038" /></> },
  { label: "Excel", stacked: true, icon: <><path d="M10 2H24L30 8V29H10Z" fill="#f0f8f0" stroke="#58a048" /><path d="M14 12h14M14 17h14M14 22h14M19 10v16M24 10v16" stroke="#58a048" strokeWidth="2" /><path d="M2 7L17 5V27L2 25Z" fill="#308838" /><path d="M6 11L13 21M13 11L6 21" stroke="#fff" strokeWidth="2.500" /></> },
  { label: "Word", stacked: true, icon: <><path d="M10 2H24L30 8V29H10Z" fill="#f4f8ff" stroke="#6890c8" /><path d="M19 10h9M19 14h9M19 18h9M19 22h9" stroke="#3868b0" /><path d="M2 7L17 5V27L2 25Z" fill="#2858a8" /><path d="M4 11l2 10l3-8l3 8l2-10" stroke="#fff" strokeWidth="2" fill="none" /></> },
  { label: "Notepad", icon: <><path d="M12 4L27 3L20 30L3 26Z" fill="#8ccdd8" /><path d="M27 3L30 29L20 30Z" fill="#d8e8e8" /><path d="M12 4H27" stroke="#e8f4f8" strokeWidth="3" /><path d="M12 9L6 25" stroke="#d0f0f4" strokeWidth="3" /></> },
  { label: "Genesis", icon: donut },
  { label: "X server", lit: true, stacked: true, icon: <><path d="M1 1H9L31 31H23Z" fill="#780878" stroke="#101018" /><path d="M29 1L3 31" stroke="#101018" strokeWidth="2" /><path d="M29 1L3 31" stroke="#780878" /></> },
  { label: "Genesis job", icon: donut },
  { label: "Bird", icon: <><rect x="2" y="1" width="29" height="30" rx="7" fill="#0a84ff" /><path d="M10 6C24 8 27 16 19 27L17 28C18 23 17 21 14 21C16 19 12 18 11 16H14C11 14 9 10 10 6Z" fill="#fff" /></> },
];

function Taskbar() {
  return (
    <div className={"flex h-[41px] shrink-0 items-stretch border-t border-[#5a7898] bg-linear-to-r from-[#0c2c5c] via-[#12305c] via-60% to-[#0a1c38] pt-px text-white " + UI}>
      <button aria-label="Start" className="flex w-[59px] shrink-0 items-center pl-2">
        <svg viewBox="0 0 38 38" className="h-[38px] w-[38px]">
          <defs><radialGradient id="orb" cy="0.800"><stop offset="0" stopColor="#58c8f0" /><stop offset="0.600" stopColor="#286898" /><stop offset="1" stopColor="#98b0c0" /></radialGradient></defs>
          <circle cx="19" cy="19" r="18" fill="url(#orb)" stroke="#183050" />
          <path d="M9 11Q13 8 18 11L16 18Q12 16 8 18Z" fill="#f06828" /><path d="M20 12Q24 14 29 11L27 18Q23 20 18 18Z" fill="#90c830" />
          <path d="M8 20Q11 18 16 20L14 27Q10 25 6 27Z" fill="#48a0e8" /><path d="M18 21Q22 23 27 20L25 27Q20 30 16 27Z" fill="#f8d040" />
        </svg>
      </button>
      <div className="flex gap-1">
        {tasks.map((t) => (
          <button
            key={t.label}
            aria-label={t.label}
            className={"flex w-[58px] items-center justify-center rounded-sm border border-[#8098b8] " + (t.lit ? "bg-linear-to-br from-[#d8dce4] to-[#a8a4b4] " : "bg-linear-to-br from-[#64789a] via-[#203c68] via-50% to-[#1c3c6c] ") + (t.stacked ? "border-r-4 border-double" : "")}
          >
            <svg viewBox="0 0 32 32" className="h-8 w-8">{t.icon}</svg>
          </button>
        ))}
      </div>
      <div className="ml-auto flex items-center">
        <svg viewBox="0 0 155 30" className="h-[30px] w-[155px]" fill="none" stroke="#e8eef4">
          <rect x="1.500" y="10.500" width="14" height="8" fill="#c8ccd0" stroke="#888" /><path d="M3 13h11M3 16h11" stroke="#555" strokeDasharray="1 1" /><path d="M3 8q3-4 6-2t5-3" stroke="#888" />
          <circle cx="31" cy="12" r="7" fill="#1828a8" stroke="#a0b0e0" />
          <text x="28" y="17" fontSize="12" fontWeight="bold" fill="#fff" stroke="none" fontFamily="Open Sans">?</text>
          <path d="M49.500 6.500h5v3h-5zM51.500 6V4.500h5v3h-2" /><path d="M50 17h6l-3 3z" fill="#fff" stroke="none" />
          <path d="M67 17h9l-4.500-5z" fill="#fff" stroke="none" />
          <path d="M89.500 8V22" /><path d="M91 9q4-2 6 1t6 0v8h-12z" fill="#fff" stroke="none" /><circle cx="98" cy="18" r="4.500" fill="#e03020" stroke="none" /><path d="M96 16l4 4M100 16l-4 4" />
          <path d="M113 12h3l5-4v14l-5-4h-3z" fill="#e8eef4" stroke="none" /><path d="M122.500 12q2 3 0 6M125 10q3 5 0 10" />
          <path d="M141.500 10.500h9v8h-9zM142 21.500h8M138.500 8v5h3M137 8h3v4" strokeWidth="1.500" />
        </svg>
        <div className="ml-[7px] w-[68px] text-center text-[12px] leading-[18px] whitespace-nowrap">
          <div>18:05</div>
          <div>2023/9/25</div>
        </div>
        <button aria-label="Show desktop" className="ml-[5px] h-full w-[14px] border border-[#5a7088] bg-linear-to-br from-[#50607a] to-[#101c34]" />
      </div>
    </div>
  );
}

/* ---------- page ---------- */

export default function App() {
  return (
    <div className="flex h-screen flex-col overflow-hidden bg-[#7ea6d8] text-black">
      <div className={"flex h-[22px] shrink-0 border-b border-[#203850] bg-linear-to-r from-[#8fb0de] via-[#16448c] via-30% to-[#0f3878] " + UI}>
        <div className="flex items-start">
          <XIcon className="-ml-[9px] h-[15px] w-[15px]" />
          <h1 className="ml-[2px] bg-linear-to-r from-white/20 via-white/30 to-transparent px-1 text-[13px] leading-[15px] whitespace-nowrap">
            Graphic Editor 9.07b2 (00@HY-HYCAM-PC411 - Windows, pid:2084)
          </h1>
        </div>
        <div aria-hidden="true" className="ml-10 flex items-center gap-8 blur-[6px]">
          <span className="h-4 w-28 bg-[#5c8cc8]" /><span className="h-4 w-16 bg-[#88a8b8]" />
          <span className="ml-28 flex h-4 w-80 items-center justify-around bg-[#7aa4d8]">
            <span className="h-2 w-20 bg-[#183868]" /><span className="h-2 w-14 bg-[#183868]" /><span className="h-2 w-28 bg-[#183868]" />
          </span>
          <span className="ml-48 h-4 w-16 bg-[#4888d8]" /><span className="h-4 w-16 bg-[#3878c8]" /><span className="h-4 w-14 bg-[#4080d0]" />
        </div>
        <div className="mr-[8px] ml-auto flex h-3 w-[102px] rounded-b border border-t-0 border-[#203050] bg-[#a8c0e0]/70">
          <button aria-label="Minimize" className="flex flex-1 items-center justify-center border-r border-[#405878]"><span className="h-1 w-3 border border-[#444] bg-white" /></button>
          <button aria-label="Maximize" className="flex flex-1 items-start justify-center border-r border-[#405878]"><span className="h-[7px] w-3 border-2 border-t-0 border-white bg-[#446]" /></button>
          <button aria-label="Close" className="flex w-[46px] items-start justify-center"><svg viewBox="0 0 12 8" className="h-2 w-3"><path d="M1 7L9 -3M11 7L3 -3" stroke="#444" strokeWidth="4" /><path d="M1 7L9 -3M11 7L3 -3" stroke="#fff" strokeWidth="2" /></svg></button>
        </div>
      </div>
      <div className="flex min-h-0 flex-1">
        <div className="flex min-w-0 flex-1 flex-col">
          <Header />
          <div className="flex min-h-0 flex-1 bg-black">
            <LayerPanel />
            <main className="relative min-w-0 flex-1 bg-black">
              <Board />
              <Popview />
            </main>
            <RightColumn />
          </div>
          <StatusRows />
        </div>
        <div className="w-2 shrink-0 border-x border-l-[#d8e8f8] border-r-[#203860] bg-linear-to-b from-[#a0c0e8] via-[#a8c4f0] to-[#5c8cd0]" />
      </div>
      <div className="h-2 shrink-0 border-y border-t-[#e0ecf8] border-b-[#203860] bg-[#86a8e0]" />
      <Taskbar />
    </div>
  );
}
